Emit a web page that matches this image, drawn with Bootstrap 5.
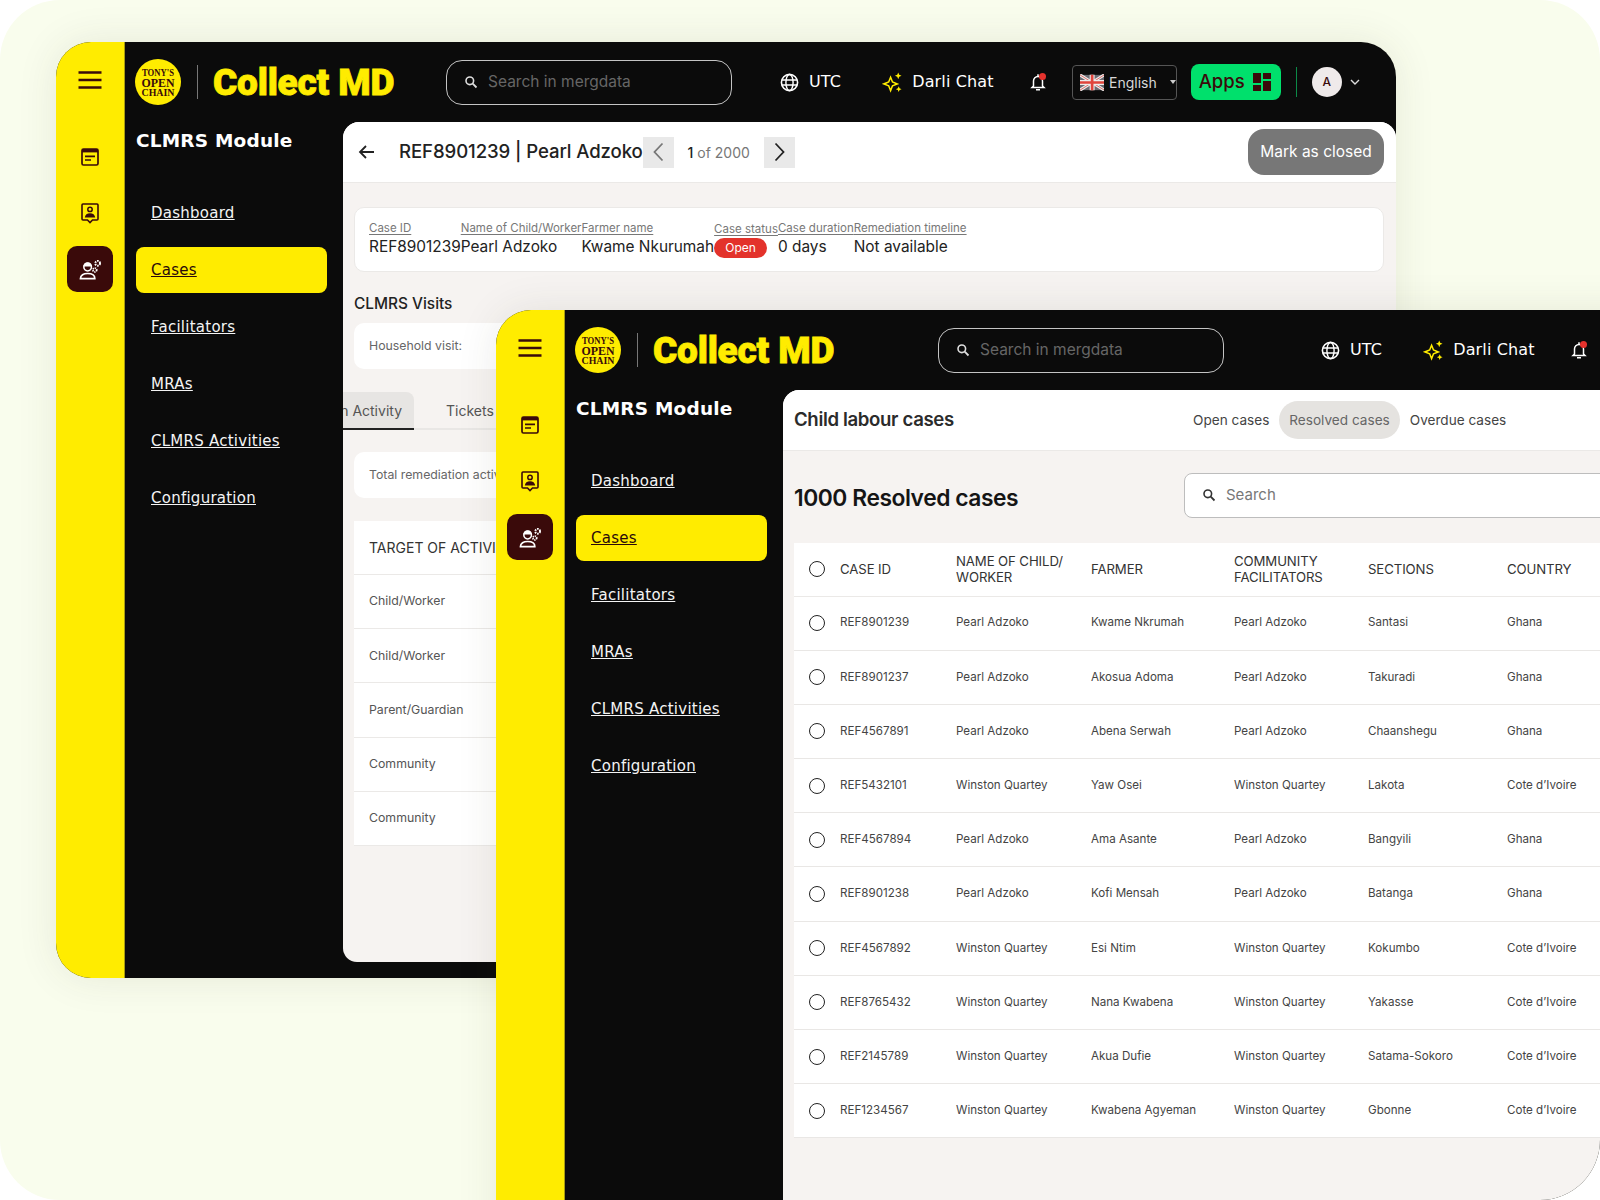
<!DOCTYPE html>
<html lang="en">
<head>
<meta charset="utf-8">
<title>Collect MD</title>
<link href="https://cdn.jsdelivr.net/npm/bootstrap@5.3.0/dist/css/bootstrap.min.css" rel="stylesheet">
<style>
html,body{margin:0;background:#fff;width:1600px;height:1200px;overflow:hidden}
body{font-family:Inter,"Liberation Sans",sans-serif;color:#222}
.stage{position:relative;width:1600px;height:1200px;overflow:hidden;border-radius:60px;background:#f9fded}
.appwin{position:absolute;width:1340px;height:936px;display:flex;background:#0b0b0b;border-radius:35px 35px 0 35px;box-shadow:0 0 40px rgba(60,60,40,.1);overflow:hidden}
.win-a{left:56px;top:42px}
.win-b{left:496px;top:310px;border-radius:35px 0 0 0}
.rail{width:69px;flex:none;background:#ffec00;border-right:1px solid #a89c10;color:#3a0a0a;padding-top:27px}
.rail-btn{width:46px;height:46px;border-radius:10px;margin-bottom:10px}
.rail-burger{height:22px;margin-bottom:43px}
.rail-on{background:#3a0a0a;color:#fff}
.main-col{flex:1;min-width:0;display:flex;flex-direction:column}
.topbar{height:80px;flex:none;padding-left:10px;color:#fff}
.seplin{width:1px;height:34px;background:#777;margin:0 15px 0 16px}
.brand{font-family:Roboto,Inter,sans-serif;font-weight:900;font-size:37px;letter-spacing:-.2px;color:#ffec00;width:194px;white-space:nowrap;-webkit-text-stroke:.8px #ffec00;line-height:1}
.srch{width:286px;height:45px;border:1px solid #c4c4c4;border-radius:16px;margin:0 48px 0 39px;padding-left:17px;color:#666;font-size:15.5px;gap:10px}
.srch svg{color:#ddd}
.win-b .srch{margin:0 97px 0 91px}
.techy{font-family:"DejaVu Sans",sans-serif;font-size:16px;letter-spacing:.15px}
.utc{margin-right:41px;gap:10px}
.darli{margin-right:36px;gap:9px;white-space:nowrap}
.bellw{position:relative;width:16px;margin-right:26px;flex:none}
.belldot{position:absolute;width:7px;height:7px;border-radius:50%;background:#e5322d;right:0;top:0}
.langbox{width:105px;height:35px;border:1px solid #555;border-radius:4px;padding-left:7px;font-size:14px;color:#d8d8d8;gap:5px;margin-right:14px;flex:none}
.caret-dn{width:0;height:0;border-left:3px solid transparent;border-right:3px solid transparent;border-top:4px solid #ccc;margin-left:8px}
.appsbtn{width:90px;height:36px;background:#00e06c;color:#3a0a0a;border-radius:8px;font-size:18.5px;font-weight:500;padding:0 10px 0 8px;flex:none;border:0}
.vsep{width:1px;height:30px;background:#0c8a48;margin:0 15px;flex:none}
.avatar{width:30px;height:30px;border-radius:50%;background:#efeaea;color:#3a0a0a;font-size:12px;font-weight:500;flex:none;margin-right:8px}
.lowerpart{flex:1;min-height:0;display:flex}
.sidebar{width:218px;flex:none;padding:0 16px 0 11px;color:#fff}
.modhead{font-family:"DejaVu Sans",sans-serif;font-weight:700;font-size:18.5px;letter-spacing:.2px;margin:7px 0 37px;line-height:24px;white-space:nowrap}
.sidelink{font-family:"DejaVu Sans",sans-serif;font-size:15px;letter-spacing:.25px;color:#f4f4f4;height:46px;margin-bottom:11.15px;padding:0 15px;border-radius:8px;display:flex;align-items:center;white-space:nowrap}
.sidelink:hover{color:#f4f4f4}
.sidelink.active,.sidelink.active:hover{background:#ffec00;color:#2a0a0a}
.panel{flex:1;min-width:0;background:#f6f3f1;border-radius:16px 16px 0 14px;margin-bottom:16px;overflow:hidden;position:relative}
.pbar{height:61px;background:#fff;border-bottom:1px solid #ebe9e7;padding:0 12px 0 15px}
.ptitle{font-size:18.6px;font-weight:500;color:#222;letter-spacing:-.1px;white-space:nowrap}
.pager{width:31px;height:31px;background:#e9e9e9;flex:none}
.pgcount{width:90px;text-align:center;font-size:14px;color:#777}
.pgcount b{font-weight:500;color:#222}
.closebtn{width:136px;height:46px;background:#777;border:0;border-radius:16px;color:#fff;font-size:15.5px;font-weight:400;padding:0;white-space:nowrap}
.closebtn:hover{background:#777;color:#fff}
.pbody{padding:24px 0 0 11px}
.infocard{width:1030px;height:65px;border:1px solid #ebe9e7;border-radius:10px;padding:0 0 0 14px;background:#fff;flex-direction:row;align-items:center;box-shadow:none}
.infocol{flex:none;white-space:nowrap}
.lab{font-size:11.5px;color:#777;text-decoration:underline;text-underline-offset:2px;line-height:15px;display:block}
.val{font-size:15.4px;color:#222;line-height:22px;display:block}
.openbadge{background:#e3322b;color:#fff;font-size:12px;font-weight:400;border-radius:10px;padding:0;width:53px;height:20px;display:flex;align-items:center;justify-content:center;margin-top:1px}
.subh{font-size:15.4px;font-weight:500;color:#222;line-height:20px;margin:22px 0 9px}
.minicard{width:1030px;height:46px;background:#fff;border:0;border-radius:10px;font-size:12.3px;color:#666;padding:0 15px;flex-direction:row;align-items:center;white-space:nowrap}
.tabline{margin:23px 0 22px -11px;height:38px;border-bottom:2px solid #e9e7e5;font-size:14px;color:#555}
.tabcur{width:71px;height:38px;background:#e7e5e3;border-bottom:2px solid #222;border-radius:0 8px 0 0;padding-right:12px;justify-content:flex-end;overflow:hidden;white-space:nowrap;flex:none;margin-bottom:-2px}
.tabcur span{flex:none}
.tabnext{margin-left:32px}
.tinytable{width:1030px;background:#fff;margin-top:23px;font-size:12.3px;color:#555}
.ttrow{height:54.2px;padding-left:15px;border-bottom:1px solid #ebe9e7;white-space:nowrap}
.tthead{font-size:14px;color:#333;height:54px}
.pane2top{padding:0 12px 0 11px}
.ctitle{font-size:18.6px;font-weight:600;color:#2b2b2b;letter-spacing:-.35px;width:389px;white-space:nowrap;flex:none}
.fakepill{font-size:13.6px;color:#444;height:38px;padding:0 10px;white-space:nowrap;flex:none;border-radius:19px}
.fakepill.now{background:#e5e3e0;color:#666}
.pane2mid{height:92px;padding-left:11px}
.bigcount{font-size:22.8px;font-weight:600;color:#151515;letter-spacing:-.45px;width:390px;white-space:nowrap;flex:none;margin-top:2px}
.tsearch{width:640px;height:45px;flex:none;background:#fff;border:1px solid #bdbdbd;border-radius:8px;padding-left:17px;gap:10px;color:#777;font-size:15px;margin-top:-4px}
.tsearch svg{color:#333}
.tablewrap{margin-left:11px;width:1031px}
.casetbl{table-layout:fixed;width:1031px;margin:0;--bs-table-bg:#fff;font-size:11.6px;color:#444}
.casetbl th{font-weight:400;font-size:13.2px;color:#333;line-height:16.5px;height:53px;padding:0;vertical-align:middle;border-bottom:1px solid #ebe9e7;letter-spacing:-.1px}
.casetbl td{height:54.2px;padding:0;vertical-align:middle;border-bottom:1px solid #e9e7e5;color:#444;white-space:nowrap}
.tick{display:block;width:16px;height:16px;border:1.3px solid #222;border-radius:50%;margin-left:15px}
</style>
</head>
<body>
<svg width="0" height="0" class="d-none">
<defs>
<symbol id="i-note" viewBox="0 0 18 18"><rect x="1" y="1" width="16" height="16" rx="1.5" fill="none" stroke="currentColor" stroke-width="1.7"/><rect x="1" y="1" width="16" height="3.4" fill="currentColor"/><path d="M4 8.4h10M4 12h6" stroke="currentColor" stroke-width="1.7" fill="none"/></symbol>
<symbol id="i-person" viewBox="0 0 18 21"><path d="M2 1h14a1 1 0 0 1 1 1v14a1 1 0 0 1-1 1h-4.5L9 19.6 6.5 17H2a1 1 0 0 1-1-1V2a1 1 0 0 1 1-1z" fill="none" stroke="currentColor" stroke-width="1.6"/><circle cx="9" cy="6.4" r="2.2" fill="none" stroke="currentColor" stroke-width="1.5"/><path d="M3.8 14.6c.3-3 2.4-4.4 5.2-4.4s4.9 1.400 5.200 4.400z" fill="currentColor"/></symbol>
<symbol id="i-worker" viewBox="0 0 24 22"><circle cx="9" cy="8.500" r="4" fill="none" stroke="currentColor" stroke-width="1.600"/><path d="M4.500 7.800a4.500 4.500 0 0 1 9 0z" fill="currentColor"/><path d="M1.500 20.500c0-3.800 3.300-5.300 7.500-5.300s7.500 1.500 7.500 5.300z" fill="none" stroke="currentColor" stroke-width="1.800"/><circle cx="19.500" cy="4.500" r="2.500" fill="none" stroke="currentColor" stroke-width="2" stroke-dasharray="1.600 .9"/><circle cx="16.500" cy="11.500" r="2" fill="none" stroke="currentColor" stroke-width="1.800" stroke-dasharray="1.300 .8"/></symbol>
<symbol id="i-search" viewBox="0 0 14 14"><circle cx="5.800" cy="5.800" r="3.800" fill="none" stroke="currentColor" stroke-width="1.600"/><path d="M8.700 8.700l3.800 3.800" stroke="currentColor" stroke-width="1.800" fill="none"/></symbol>
<symbol id="i-globe" viewBox="0 0 20 20"><circle cx="10" cy="10" r="8.500" fill="none" stroke="currentColor" stroke-width="1.700"/><ellipse cx="10" cy="10" rx="3.800" ry="8.500" fill="none" stroke="currentColor" stroke-width="1.500"/><path d="M2 7.300h16M2 12.700h16" stroke="currentColor" stroke-width="1.500" fill="none"/></symbol>
<symbol id="i-spark" viewBox="0 0 22 22"><path d="M9 5.500l2 5 5 2-5 2-2 5-2-5-5-2 5-2z" fill="none" stroke="#ffec00" stroke-width="1.600"/><path d="M17 .5l1 2.500 2.500 1-2.500 1-1 2.500-1-2.500-2.500-1 2.500-1zM17.500 15l.9 2.100 2.100.9-2.100.9-.9 2.100-.9-2.100-2.100-.9 2.100-.9z" fill="#ffec00"/></symbol>
<symbol id="i-bell" viewBox="0 0 16 18"><path d="M3.500 13V8a4.500 4.500 0 0 1 9 0v5l1.500 1.500H2z" fill="none" stroke="currentColor" stroke-width="1.500"/><path d="M6 16.800h4" stroke="currentColor" stroke-width="1.500" fill="none"/><path d="M8 1.200v2" stroke="currentColor" stroke-width="1.500" fill="none"/></symbol>
<symbol id="i-flag" viewBox="0 0 27 17"><rect width="27" height="17" fill="#6a6a72"/><path d="M0 0l27 17M27 0L0 17" stroke="#ececec" stroke-width="3.400"/><path d="M0 0l27 17M27 0L0 17" stroke="#d8605a" stroke-width="1"/><path d="M13.500 0v17M0 8.500h27" stroke="#ececec" stroke-width="5.500"/><path d="M13.500 0v17M0 8.500h27" stroke="#e0443c" stroke-width="3"/></symbol>
<symbol id="i-grid" viewBox="0 0 18 18"><path d="M0 0h8v10H0zM10 0h8v6h-8zM0 12h8v6H0zM10 8h8v10h-8z" fill="currentColor"/></symbol>
<symbol id="i-logo" viewBox="0 0 46 46"><circle cx="23" cy="23" r="23" fill="#ffec00"/><g fill="#3a0a0a" font-family="'Liberation Serif',serif" font-weight="700" text-anchor="middle"><text x="23" y="17" font-size="9.500" textLength="32" lengthAdjust="spacingAndGlyphs">TONY'S</text><text x="23" y="28" font-size="13" textLength="33" lengthAdjust="spacingAndGlyphs">OPEN</text><text x="23" y="37" font-size="9.500" textLength="33" lengthAdjust="spacingAndGlyphs">CHAIN</text></g></symbol>
</defs>
</svg>

<div class="stage">

<!-- back window -->
<section class="appwin win-a">
  <aside class="rail d-flex flex-column align-items-center">
    <div class="rail-burger d-flex"><svg width="24" height="22" viewBox="0 0 24 22"><path d="M.5 3.500h23M.5 11h23M.5 18.500h23" stroke="currentColor" stroke-width="2.600"/></svg></div>
    <div class="rail-btn d-flex align-items-center justify-content-center"><svg width="18" height="18"><use href="#i-note"/></svg></div>
    <div class="rail-btn d-flex align-items-center justify-content-center"><svg width="18" height="21"><use href="#i-person"/></svg></div>
    <div class="rail-btn rail-on d-flex align-items-center justify-content-center"><svg width="23" height="21"><use href="#i-worker"/></svg></div>
  </aside>
  <div class="main-col">
    <header class="topbar d-flex align-items-center">
      <svg width="46" height="46" class="flex-none"><use href="#i-logo"/></svg>
      <span class="seplin"></span>
      <span class="brand">Collect MD</span>
      <div class="srch d-flex align-items-center flex-none"><svg width="14" height="14"><use href="#i-search"/></svg><span>Search in mergdata</span></div>
      <div class="utc techy d-flex align-items-center"><svg width="19" height="19"><use href="#i-globe"/></svg><span>UTC</span></div>
      <div class="darli techy d-flex align-items-center"><svg width="21" height="21"><use href="#i-spark"/></svg><span>Darli Chat</span></div>
      <div class="bellw"><svg width="16" height="18" class="d-block"><use href="#i-bell"/></svg><span class="belldot"></span></div>
      <div class="langbox d-flex align-items-center"><svg width="27" height="17"><use href="#i-flag"/></svg><span>English</span><span class="caret-dn"></span></div>
      <button class="appsbtn btn d-flex align-items-center justify-content-between"><span>Apps</span><svg width="18" height="18"><use href="#i-grid"/></svg></button>
      <span class="vsep"></span>
      <div class="avatar d-flex align-items-center justify-content-center">A</div>
      <svg width="10" height="6" viewBox="0 0 10 6"><path d="M1 1l4 4 4-4" fill="none" stroke="#ddd" stroke-width="1.400"/></svg>
    </header>
    <div class="lowerpart">
      <nav class="sidebar nav flex-column flex-nowrap d-block">
        <div class="modhead">CLMRS Module</div>
        <a class="sidelink" href="#">Dashboard</a>
        <a class="sidelink active" href="#">Cases</a>
        <a class="sidelink" href="#">Facilitators</a>
        <a class="sidelink" href="#">MRAs</a>
        <a class="sidelink" href="#">CLMRS Activities</a>
        <a class="sidelink" href="#">Configuration</a>
      </nav>
      <main class="panel">
        <div class="pbar d-flex align-items-center">
          <svg width="17" height="16" viewBox="0 0 17 16" class="me-4 flex-none"><path d="M16 8H2M8 2L2 8l6 6" fill="none" stroke="#222" stroke-width="1.800"/></svg>
          <span class="ptitle">REF8901239 | Pearl Adzoko</span>
          <div class="pager d-flex align-items-center justify-content-center prevgap"><svg width="11" height="20" viewBox="0 0 11 20"><path d="M9.500 1.500L1.500 10l8 8.500" fill="none" stroke="#777" stroke-width="1.800"/></svg></div>
          <div class="pgcount"><b>1</b> of 2000</div>
          <div class="pager d-flex align-items-center justify-content-center"><svg width="11" height="20" viewBox="0 0 11 20"><path d="M1.500 1.500l8 8.500-8 8.500" fill="none" stroke="#222" stroke-width="1.800"/></svg></div>
          <button class="closebtn btn ms-auto">Mark as closed</button>
        </div>
        <div class="pbody">
          <div class="infocard card">
            <div class="infocol col-w1"><span class="lab">Case ID</span><span class="val">REF8901239</span></div>
            <div class="infocol col-w2"><span class="lab">Name of Child/Worker</span><span class="val">Pearl Adzoko</span></div>
            <div class="infocol col-w3"><span class="lab">Farmer name</span><span class="val">Kwame Nkurumah</span></div>
            <div class="infocol col-w4"><span class="lab">Case status</span><span class="openbadge badge">Open</span></div>
            <div class="infocol col-w5"><span class="lab">Case duration</span><span class="val">0 days</span></div>
            <div class="infocol col-w6"><span class="lab">Remediation timeline</span><span class="val">Not available</span></div>
          </div>
          <div class="subh">CLMRS Visits</div>
          <div class="minicard card">Household visit:</div>
          <div class="tabline d-flex align-items-center">
            <div class="tabcur d-flex align-items-center"><span>Remediation Activity</span></div>
            <div class="tabnext">Tickets</div>
          </div>
          <div class="minicard card">Total remediation activities</div>
          <div class="tinytable">
            <div class="ttrow tthead d-flex align-items-center">TARGET OF ACTIVITY</div>
            <div class="ttrow d-flex align-items-center">Child/Worker</div>
            <div class="ttrow d-flex align-items-center">Child/Worker</div>
            <div class="ttrow d-flex align-items-center">Parent/Guardian</div>
            <div class="ttrow d-flex align-items-center">Community</div>
            <div class="ttrow d-flex align-items-center">Community</div>
          </div>
        </div>
      </main>
    </div>
  </div>
</section>

<!-- front window -->
<section class="appwin win-b">
  <aside class="rail d-flex flex-column align-items-center">
    <div class="rail-burger d-flex"><svg width="24" height="22" viewBox="0 0 24 22"><path d="M.5 3.500h23M.5 11h23M.5 18.500h23" stroke="currentColor" stroke-width="2.600"/></svg></div>
    <div class="rail-btn d-flex align-items-center justify-content-center"><svg width="18" height="18"><use href="#i-note"/></svg></div>
    <div class="rail-btn d-flex align-items-center justify-content-center"><svg width="18" height="21"><use href="#i-person"/></svg></div>
    <div class="rail-btn rail-on d-flex align-items-center justify-content-center"><svg width="23" height="21"><use href="#i-worker"/></svg></div>
  </aside>
  <div class="main-col">
    <header class="topbar d-flex align-items-center">
      <svg width="46" height="46" class="flex-none"><use href="#i-logo"/></svg>
      <span class="seplin"></span>
      <span class="brand">Collect MD</span>
      <div class="srch d-flex align-items-center flex-none"><svg width="14" height="14"><use href="#i-search"/></svg><span>Search in mergdata</span></div>
      <div class="utc techy d-flex align-items-center"><svg width="19" height="19"><use href="#i-globe"/></svg><span>UTC</span></div>
      <div class="darli techy d-flex align-items-center"><svg width="21" height="21"><use href="#i-spark"/></svg><span>Darli Chat</span></div>
      <div class="bellw"><svg width="16" height="18" class="d-block"><use href="#i-bell"/></svg><span class="belldot"></span></div>
    </header>
    <div class="lowerpart">
      <nav class="sidebar nav flex-column flex-nowrap d-block">
        <div class="modhead">CLMRS Module</div>
        <a class="sidelink" href="#">Dashboard</a>
        <a class="sidelink active" href="#">Cases</a>
        <a class="sidelink" href="#">Facilitators</a>
        <a class="sidelink" href="#">MRAs</a>
        <a class="sidelink" href="#">CLMRS Activities</a>
        <a class="sidelink" href="#">Configuration</a>
      </nav>
      <main class="panel">
        <div class="pbar pane2top d-flex align-items-center">
          <span class="ctitle">Child labour cases</span>
          <span class="fakepill d-flex align-items-center">Open cases</span>
          <span class="fakepill now d-flex align-items-center">Resolved cases</span>
          <span class="fakepill d-flex align-items-center">Overdue cases</span>
        </div>
        <div class="pane2mid d-flex align-items-center">
          <span class="bigcount">1000 Resolved cases</span>
          <div class="tsearch d-flex align-items-center"><svg width="14" height="14"><use href="#i-search"/></svg><span>Search</span></div>
        </div>
        <div class="tablewrap">
          <table class="table casetbl">
            <colgroup><col style="width:46px"><col style="width:116px"><col style="width:135px"><col style="width:143px"><col style="width:134px"><col style="width:139px"><col></colgroup>
            <thead><tr><th><span class="tick"></span></th><th>CASE ID</th><th>NAME OF CHILD/<br>WORKER</th><th>FARMER</th><th>COMMUNITY<br>FACILITATORS</th><th>SECTIONS</th><th>COUNTRY</th></tr></thead>
            <tbody>
              <tr><td><span class="tick"></span></td><td>REF8901239</td><td>Pearl Adzoko</td><td>Kwame Nkrumah</td><td>Pearl Adzoko</td><td>Santasi</td><td>Ghana</td></tr>
              <tr><td><span class="tick"></span></td><td>REF8901237</td><td>Pearl Adzoko</td><td>Akosua Adoma</td><td>Pearl Adzoko</td><td>Takuradi</td><td>Ghana</td></tr>
              <tr><td><span class="tick"></span></td><td>REF4567891</td><td>Pearl Adzoko</td><td>Abena Serwah</td><td>Pearl Adzoko</td><td>Chaanshegu</td><td>Ghana</td></tr>
              <tr><td><span class="tick"></span></td><td>REF5432101</td><td>Winston Quartey</td><td>Yaw Osei</td><td>Winston Quartey</td><td>Lakota</td><td>Cote d’Ivoire</td></tr>
              <tr><td><span class="tick"></span></td><td>REF4567894</td><td>Pearl Adzoko</td><td>Ama Asante</td><td>Pearl Adzoko</td><td>Bangyili</td><td>Ghana</td></tr>
              <tr><td><span class="tick"></span></td><td>REF8901238</td><td>Pearl Adzoko</td><td>Kofi Mensah</td><td>Pearl Adzoko</td><td>Batanga</td><td>Ghana</td></tr>
              <tr><td><span class="tick"></span></td><td>REF4567892</td><td>Winston Quartey</td><td>Esi Ntim</td><td>Winston Quartey</td><td>Kokumbo</td><td>Cote d’Ivoire</td></tr>
              <tr><td><span class="tick"></span></td><td>REF8765432</td><td>Winston Quartey</td><td>Nana Kwabena</td><td>Winston Quartey</td><td>Yakasse</td><td>Cote d’Ivoire</td></tr>
              <tr><td><span class="tick"></span></td><td>REF2145789</td><td>Winston Quartey</td><td>Akua Dufie</td><td>Winston Quartey</td><td>Satama-Sokoro</td><td>Cote d’Ivoire</td></tr>
              <tr><td><span class="tick"></span></td><td>REF1234567</td><td>Winston Quartey</td><td>Kwabena Agyeman</td><td>Winston Quartey</td><td>Gbonne</td><td>Cote d’Ivoire</td></tr>
            </tbody>
          </table>
        </div>
      </main>
    </div>
  </div>
</section>
</div>
<script src="https://cdn.jsdelivr.net/npm/bootstrap@5.3.0/dist/js/bootstrap.bundle.min.js"></script>
</body>
</html>
